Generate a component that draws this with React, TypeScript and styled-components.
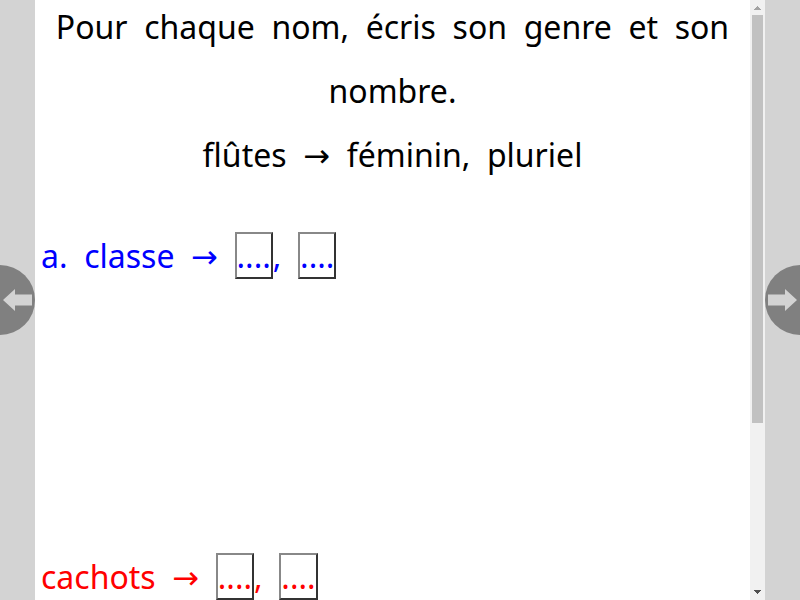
import React from 'react';
import styled, { createGlobalStyle } from 'styled-components';

const GlobalStyle = createGlobalStyle`
  * { box-sizing: border-box; }
  body { margin: 0; overflow: hidden; background: #d3d3d3; }
`;

const Page = styled.div`
  display: grid;
  grid-template-columns: 35px 715px 15px 35px;
  width: 800px;
  height: 600px;
  overflow: hidden;
  background: #d3d3d3;
  font-family: 'Noto Sans', 'DejaVu Sans', sans-serif;
  font-size: 32px;
  line-height: 64px;
  word-spacing: 8.32px;
`;

const Side = styled.div<{ $end?: boolean }>`
  display: flex;
  align-items: center;
  justify-content: ${(p) => (p.$end ? 'flex-start' : 'flex-end')};
  overflow: hidden;
`;

const NavButton = styled.button<{ $end?: boolean }>`
  flex: none;
  width: 35px;
  height: 70px;
  padding: 0;
  border: 0;
  background: #808080;
  border-radius: ${(p) => (p.$end ? '35px 0 0 35px' : '0 35px 35px 0')};
  svg { display: block; }
`;

const Sheet = styled.main`
  height: 600px;
  padding: 0 6px;
  overflow: hidden;
  background: #fff;
`;

const Heading = styled.div`
  height: 192px;
  margin-top: -5px;
  text-align: center;
  color: #000;
`;

const Question = styled.div<{ $color: string }>`
  height: 321px;
  padding-top: 37px;
  white-space: nowrap;
  color: ${(p) => p.$color};
`;

const Blank = styled.span`
  border: 2px solid;
  border-color: #888 #333 #333 #888;
`;

const Track = styled.div`
  display: flex;
  flex-direction: column;
  align-items: center;
  height: 600px;
  background: #f1f1f1;
  svg { display: block; flex: none; }
`;

const Thumb = styled.div`
  width: 11px;
  height: 408px;
  margin-bottom: auto;
  background: #c1c1c1;
`;

export default function App() {
  return (
    <>
      <GlobalStyle />
      <Page>
        <Side>
          <NavButton aria-label="Précédent">
            <svg width="35" height="70"><path d="M3 35 15 24V29.5H32V40.5H15V46Z" fill="#d3d3d3" /></svg>
          </NavButton>
        </Side>
        <Sheet>
          <Heading>
            <div>Pour chaque nom, écris son genre et son nombre.</div>
            <div>flûtes → féminin, pluriel</div>
          </Heading>
          <Question $color="#00f">a. classe → <Blank>....</Blank>, <Blank>....</Blank></Question>
          <Question $color="#f00">cachots → <Blank>....</Blank>, <Blank>....</Blank></Question>
        </Sheet>
        <Track>
          <svg width="15" height="15" shapeRendering="crispEdges"><path d="M4 10H11V9H10V8H9V7H8V6H7V7H6V8H5V9H4Z" fill="#a3a3a3" /></svg>
          <Thumb />
          <svg width="15" height="15" shapeRendering="crispEdges"><path d="M4 5H11V6H10V7H9V8H8V9H7V8H6V7H5V6H4Z" fill="#505050" /></svg>
        </Track>
        <Side $end>
          <NavButton $end aria-label="Suivant">
            <svg width="35" height="70"><path d="M32 35 20 24V29.5H3V40.5H20V46Z" fill="#d3d3d3" /></svg>
          </NavButton>
        </Side>
      </Page>
    </>
  );
}
